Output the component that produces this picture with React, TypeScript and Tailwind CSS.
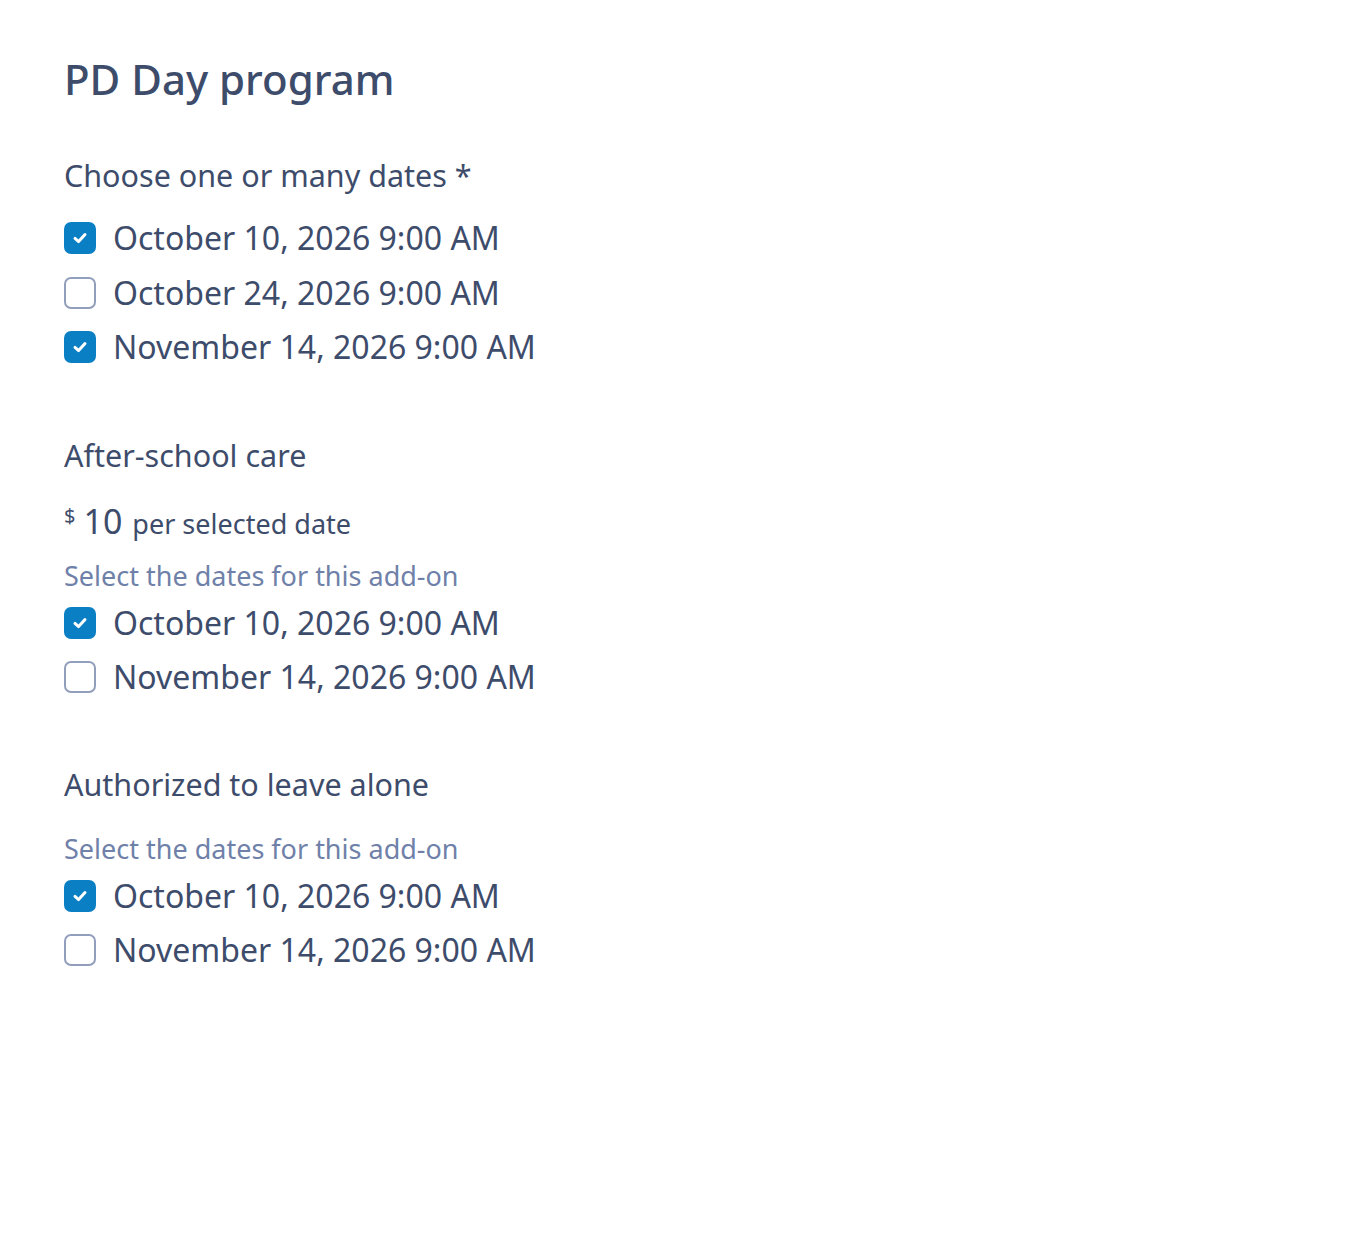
import { useState } from 'react';

const FONT = { fontFamily: '"Noto Sans", "Open Sans", sans-serif' };

type Opt = { id: string; label: string; checked: boolean };

function CheckRow({ opt, onToggle }: { opt: Opt; onToggle: () => void }) {
  return (
    <label className="flex h-[54.5px] cursor-pointer items-center gap-[17px]">
      <span
        className={
          opt.checked
            ? 'flex h-8 w-8 shrink-0 items-center justify-center rounded-[7px] bg-[#0a7fc4]'
            : 'flex h-8 w-8 shrink-0 items-center justify-center rounded-[7px] border-2 border-[#919fbd] bg-white'
        }
      >
        {opt.checked && (
          <svg width="20" height="20" viewBox="0 0 20 20" fill="none">
            <path d="M5 10.4 8.6 13.6 15 6.6" stroke="#fff" strokeWidth="3" strokeLinecap="round" strokeLinejoin="round" />
          </svg>
        )}
      </span>
      <input type="checkbox" className="hidden" checked={opt.checked} onChange={onToggle} />
      <span className="text-[32px] leading-none text-[#3e4c6b]">{opt.label}</span>
    </label>
  );
}

function useOpts(initial: Opt[]) {
  const [opts, setOpts] = useState(initial);
  const toggle = (id: string) =>
    setOpts((prev) => prev.map((o) => (o.id === id ? { ...o, checked: !o.checked } : o)));
  return [opts, toggle] as const;
}

export default function App() {
  const [dates, toggleDate] = useOpts([
    { id: 'd1', label: 'October 10, 2026 9:00 AM', checked: true },
    { id: 'd2', label: 'October 24, 2026 9:00 AM', checked: false },
    { id: 'd3', label: 'November 14, 2026 9:00 AM', checked: true },
  ]);
  const [care, toggleCare] = useOpts([
    { id: 'c1', label: 'October 10, 2026 9:00 AM', checked: true },
    { id: 'c2', label: 'November 14, 2026 9:00 AM', checked: false },
  ]);
  const [alone, toggleAlone] = useOpts([
    { id: 'a1', label: 'October 10, 2026 9:00 AM', checked: true },
    { id: 'a2', label: 'November 14, 2026 9:00 AM', checked: false },
  ]);

  return (
    <div className="min-h-[1260px] bg-white px-16 pt-[55px] text-[#3e4c6b]" style={FONT}>
      <h1 className="text-[42px] leading-[48px] font-medium text-[#3e4c6b]">PD Day program</h1>

      {/* Dates */}
      <p className="mt-[52px] text-[30.5px] leading-[40px]">Choose one or many dates *</p>
      <div className="mt-4">
        {dates.map((o) => (
          <CheckRow key={o.id} opt={o} onToggle={() => toggleDate(o.id)} />
        ))}
      </div>

      {/* After-school care */}
      <p className="mt-[60px] text-[30.5px] leading-[40px]">After-school care</p>
      <p className="mt-[26px] flex items-baseline leading-[40px]">
        <span className="relative -top-[11px] mr-[8px] text-[20px]">$</span>
        <span className="mr-[10px] text-[34px]">10</span>
        <span className="text-[27px]">per selected date</span>
      </p>
      <p className="mt-[12px] text-[27px] leading-[34px] text-[#6f81a9]">Select the dates for this add-on</p>
      <div className="mt-[3px]">
        {care.map((o) => (
          <CheckRow key={o.id} opt={o} onToggle={() => toggleCare(o.id)} />
        ))}
      </div>

      {/* Authorized to leave alone */}
      <p className="mt-[59px] text-[30.5px] leading-[40px]">Authorized to leave alone</p>
      <p className="mt-[28px] text-[27px] leading-[34px] text-[#6f81a9]">Select the dates for this add-on</p>
      <div className="mt-[3px]">
        {alone.map((o) => (
          <CheckRow key={o.id} opt={o} onToggle={() => toggleAlone(o.id)} />
        ))}
      </div>
    </div>
  );
}
